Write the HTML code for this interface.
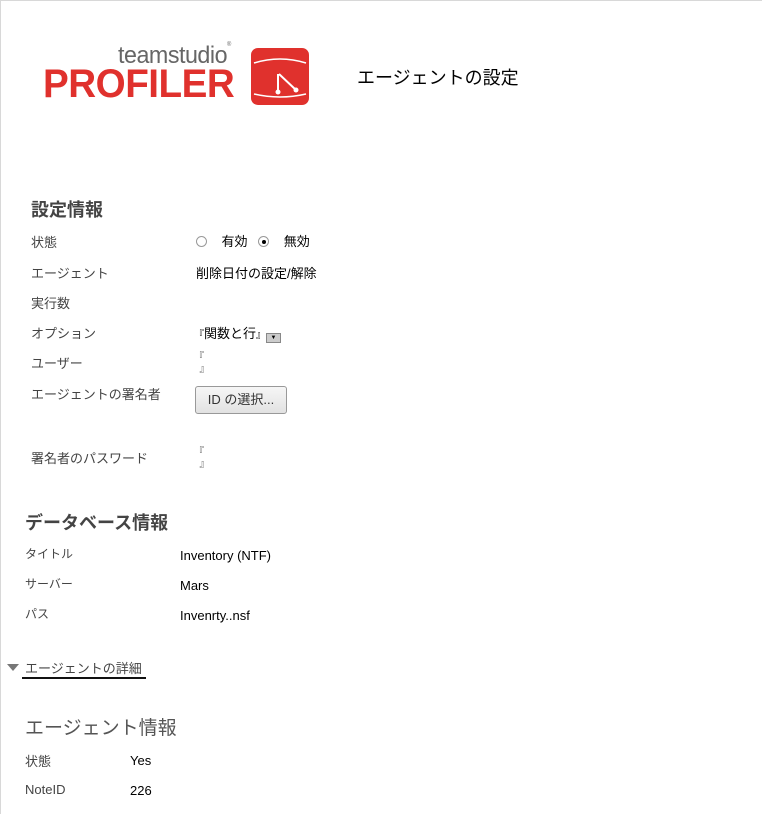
<!DOCTYPE html>
<html><head><meta charset="utf-8"><style>
body{margin:0;width:763px;height:814px;overflow:hidden;background:#fff;font-family:"Liberation Sans","Noto Sans CJK JP",sans-serif;font-size:13px;color:#000;}
.frame{position:absolute;left:0;top:0;width:762px;height:814px;border-left:1px solid #d8d8d8;border-top:1px solid #d8d8d8;box-sizing:border-box}
.a{position:absolute;white-space:nowrap}
.l{color:#444}
.h{font-weight:bold;font-size:18px;color:#444}
.btn{position:absolute;left:195px;top:386px;width:92px;height:28px;border:1px solid #999;border-radius:3px;background:linear-gradient(#f6f6f6,#e2e2e2);box-sizing:border-box;font-size:13px;color:#333;text-align:center;line-height:26px}
.r{display:inline-block;width:9px;height:9px;border:1px solid #999;border-radius:50%;vertical-align:-1px;position:relative;background:#fff}
.r.on:after{content:"";position:absolute;left:2.5px;top:2.5px;width:4px;height:4px;border-radius:50%;background:#000}
.br{font-size:10px;color:#555;line-height:12px}
</style></head><body><div class="frame"></div>
<div class="a" style="left:118px;top:42px;font-size:24px;color:#666;letter-spacing:-0.5px;transform:scaleX(0.97);transform-origin:left">teamstudio<span style="font-size:6px;vertical-align:top">®</span></div>
<div class="a" style="left:43px;top:62px;font-size:40px;font-weight:bold;color:#e0312d;letter-spacing:-0.5px;transform:scaleX(0.965);transform-origin:left">PROFILER</div>
<svg class="a" style="left:251px;top:48px" width="58" height="57" viewBox="0 0 58 57"><rect width="58" height="57" rx="7" fill="#e0312d"/><path d="M3 15 Q29 7 55 15" stroke="#fff" stroke-width="1.5" fill="none"/><path d="M3 46 Q29 52 55 46" stroke="#fff" stroke-width="1.5" fill="none"/><path d="M27 26 V44 M28 26 L45 42" stroke="#fff" stroke-width="2" fill="none"/><circle cx="27" cy="44" r="2.5" fill="#fff"/><circle cx="45" cy="42" r="2.5" fill="#fff"/></svg>
<div class="a" style="left:357px;top:64px;font-size:18px">エージェントの設定</div>
<div class="a h" style="left:31px;top:196px">設定情報</div>
<div class="a l" style="left:31px;top:232px">状態</div>
<div class="a" style="left:196px;top:231px"><span class="r"></span>&nbsp;&nbsp;&nbsp; 有効 &nbsp;&nbsp;<span class="r on"></span>&nbsp;&nbsp;&nbsp; 無効</div>
<div class="a l" style="left:31px;top:263px">エージェント</div>
<div class="a" style="left:196px;top:263px">削除日付の設定/解除</div>
<div class="a l" style="left:31px;top:293px">実行数</div>
<div class="a l" style="left:31px;top:323px">オプション</div>
<div class="a" style="left:194px;top:323px"><span style="font-size:10px">『</span>関数と行<span style="font-size:10px">』</span><span style="display:inline-block;width:13px;height:8px;background:#ccc;border:1px solid #888;vertical-align:-1px;font-size:6px;line-height:8px;text-align:center">▼</span></div>
<div class="a l" style="left:31px;top:353px">ユーザー</div>
<div class="a br" style="left:194px;top:352px">『<br>&nbsp;&nbsp;』</div>
<div class="a l" style="left:31px;top:384px">エージェントの署名者</div>
<div class="btn">ID の選択...</div>
<div class="a l" style="left:31px;top:448px">署名者のパスワード</div>
<div class="a br" style="left:194px;top:447px">『<br>&nbsp;&nbsp;』</div>
<div class="a h" style="left:25px;top:509px">データベース情報</div>
<div class="a l" style="left:25px;top:545px;font-size:12px">タイトル</div>
<div class="a" style="left:180px;top:548px">Inventory (NTF)</div>
<div class="a l" style="left:25px;top:575px;font-size:12px">サーバー</div>
<div class="a" style="left:180px;top:578px">Mars</div>
<div class="a l" style="left:25px;top:605px;font-size:12px">パス</div>
<div class="a" style="left:180px;top:608px">Invenrty..nsf</div>
<div class="a" style="left:7px;top:664px;width:0;height:0;border-left:6px solid transparent;border-right:6px solid transparent;border-top:7px solid #777"></div>
<div class="a l" style="left:25px;top:658px">エージェントの詳細</div>
<div class="a" style="left:22px;top:677px;width:124px;height:2px;background:#111"></div>
<div class="a" style="left:25px;top:713px;font-size:19px;color:#555">エージェント情報</div>
<div class="a l" style="left:25px;top:751px">状態</div>
<div class="a" style="left:130px;top:753px">Yes</div>
<div class="a l" style="left:25px;top:782px">NoteID</div>
<div class="a" style="left:130px;top:783px">226</div>
</body></html>
